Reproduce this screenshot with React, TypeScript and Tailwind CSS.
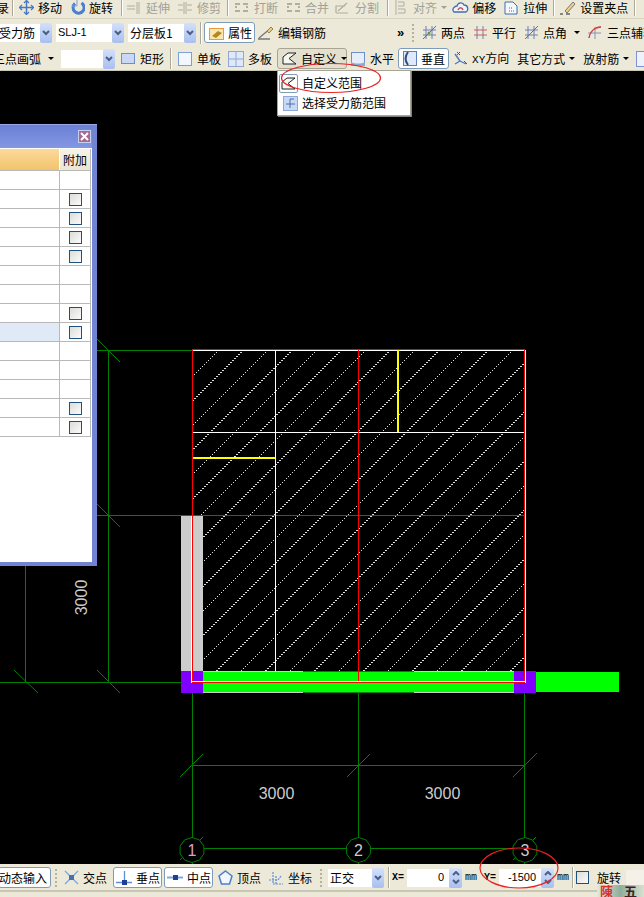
import React from 'react';

const FONT = { fontFamily: '"Noto Sans CJK SC", "Liberation Sans", sans-serif' };
const MONO = { fontFamily: '"Liberation Mono", monospace' };
const ARIAL = { fontFamily: '"Liberation Sans", sans-serif' };

const Sep = ({ ml = 0, h = 'h-[24px]' }: { ml?: number; h?: string }) => (
  <span className={`${h} w-[2px] shrink-0 border-l border-[#aca899] border-r-white`} style={{ marginLeft: ml, borderRightWidth: 1 }} />
);

const Grip = ({ ml = 0 }: { ml?: number }) => (
  <span className="flex h-[22px] w-[2px] shrink-0 flex-col justify-between py-[2px]" style={{ marginLeft: ml }}>
    {[0, 1, 2, 3, 4].map((i) => (
      <span key={i} className="h-[2px] w-[2px] bg-[#b5b2a0]" />
    ))}
  </span>
);

const Txt = ({ ml = 0, w, gray, children }: { ml?: number; w?: number; gray?: boolean; children: React.ReactNode }) => (
  <span
    className={`shrink-0 whitespace-nowrap text-[12px] leading-[14px] ${gray ? 'text-[#a3a196]' : 'text-black'}`}
    style={{ marginLeft: ml, width: w }}
  >
    {children}
  </span>
);

const Ic = ({ ml = 0, w = 16, h = 16, children }: { ml?: number; w?: number; h?: number; children: React.ReactNode }) => (
  <svg width={w} height={h} viewBox={`0 0 ${w} ${h}`} fill="none" className="shrink-0" style={{ marginLeft: ml }}>
    {children}
  </svg>
);

const Arrow = ({ ml = 0 }: { ml?: number }) => (
  <span
    className="h-0 w-0 shrink-0 border-x-[3px] border-t-[3px] border-x-transparent border-t-black"
    style={{ marginLeft: ml }}
  />
);

const DropBtn = ({ ml = 0, h = 'h-[20px]' }: { ml?: number; h?: string }) => (
  <span
    className={`flex ${h} w-[12px] shrink-0 items-center justify-center rounded-[2px] bg-linear-to-b from-[#d3e0fb] to-[#a9bfee]`}
    style={{ marginLeft: ml }}
  >
    <svg width="8" height="6" viewBox="0 0 8 6" fill="none">
      <path d="M1 1 L4 4 L7 1" stroke="#4b5f85" strokeWidth="2" />
    </svg>
  </span>
);

const Spin = ({ ml = 0 }: { ml?: number }) => (
  <span
    className="flex h-[20px] w-[13px] shrink-0 flex-col items-center justify-center gap-[3px] rounded-[2px] bg-linear-to-b from-[#d3e0fb] to-[#a9bfee]"
    style={{ marginLeft: ml }}
  >
    <svg width="8" height="5" viewBox="0 0 8 5" fill="none"><path d="M1 4 L4 1 L7 4" stroke="#4b5f85" strokeWidth="2" /></svg>
    <svg width="8" height="5" viewBox="0 0 8 5" fill="none"><path d="M1 1 L4 4 L7 1" stroke="#4b5f85" strokeWidth="2" /></svg>
  </span>
);

const Field = ({ ml = 0, w, right, children }: { ml?: number; w: number; right?: boolean; children?: React.ReactNode }) => (
  <span
    className={`flex h-[18px] shrink-0 items-center bg-white text-[12px] text-black ${right ? 'justify-end pr-[5px]' : 'pl-[2px]'}`}
    style={{ marginLeft: ml, width: w }}
  >
    {children}
  </span>
);

const Pressed = ({ ml = 0, w, dark, children }: { ml?: number; w: number; dark?: boolean; children: React.ReactNode }) => (
  <span
    className={`flex h-[21px] shrink-0 items-center rounded-[3px] border ${dark ? 'border-[#a8a594] bg-[#e3e0d0]' : 'border-[#7f9db9] bg-white'}`}
    style={{ marginLeft: ml, width: w }}
  >
    {children}
  </span>
);

const GrayTrim = ({ flip }: { flip?: boolean }) => (
  <Ic w={14} h={14}>
    <path d={flip ? 'M0 4H5M0 9H5M9 4H14M9 9H14M6 1V13M8 1V13' : 'M0 5H8M0 8H8M10 1V13M12 1V13'} stroke="#b0ae9f" />
  </Ic>
);

const BreakIc = () => (
  <Ic w={15} h={14}>
    <path d="M1 3H6M9 3H14M1 10H6M9 10H14M1 6H3M12 6H14" stroke="#b0ae9f" strokeWidth="2" />
  </Ic>
);

const TwoLines = ({ dot, diag = true }: { dot?: boolean; diag?: boolean }) => (
  <Ic w={15} h={15}>
    <path d="M4 1V14M10 1V14" stroke="#6f7fb5" />
    <path d="M1 5H14M1 10H14" stroke={diag ? '#6f7fb5' : '#d05a5a'} />
    {diag && <path d="M1 14L14 1" stroke="#d84040" />}
    {dot && <circle cx="7" cy="8" r="1.5" fill="#5a9a40" />}
  </Ic>
);

const Row1 = () => (
  <div className="flex h-[19px] items-center overflow-hidden border-b border-[#d8d4c2] pb-[3px]">
    <Txt ml={-3} w={15}>录</Txt>
    <Sep ml={0} h="h-[17px]" />
    <Ic ml={5} w={15} h={15}>
      <path d="M7.5 1V14M1 7.5H14" stroke="#4a78c0" strokeWidth="1.5" />
      <path d="M5 3L7.5 .5L10 3M5 12L7.5 14.5L10 12M3 5L.5 7.5L3 10M12 5L14.500 7.500L12 10" stroke="#4a78c0" strokeWidth="1.3" />
    </Ic>
    <Txt ml={4}>移动</Txt>
    <Ic ml={9} w={14} h={15}>
      <path d="M4 3.500A5.500 5.500 0 1 0 10.500 3" stroke="#4a7fd0" strokeWidth="3" />
      <path d="M6 0V6H1" stroke="#7aa0e0" strokeWidth="1" />
    </Ic>
    <Txt ml={4}>旋转</Txt>
    <Sep ml={8} h="h-[17px]" />
    <span className="ml-[4px]"><GrayTrim /></span>
    <Txt ml={5} gray>延伸</Txt>
    <span className="ml-[8px]"><GrayTrim flip /></span>
    <Txt ml={5} gray>修剪</Txt>
    <Sep ml={6} h="h-[17px]" />
    <span className="ml-[5px]"><BreakIc /></span>
    <Txt ml={5} gray>打断</Txt>
    <span className="ml-[8px]"><BreakIc /></span>
    <Txt ml={4} gray>合并</Txt>
    <Ic ml={6} w={15} h={14}>
      <path d="M1 12H13M1 12V5L10 5M3 10L12 2" stroke="#b0ae9f" strokeWidth="1.200" />
    </Ic>
    <Txt ml={5} gray>分割</Txt>
    <Sep ml={8} h="h-[17px]" />
    <Ic ml={6} w={11} h={15}>
      <path d="M1 0V15M3 2H9V6H3M3 9H10V13H3" stroke="#b0ae9f" />
    </Ic>
    <Txt ml={7} gray>对齐</Txt>
    <span className="ml-[4px] h-0 w-0 shrink-0 border-x-[3px] border-t-[3px] border-x-transparent border-t-[#a3a196]" />
    <Ic ml={5} w={17} h={14}>
      <path d="M2 11C-1 8 3 5 5 5C6 1 11 1 12 4C16 4 17 9 14 11Z" stroke="#3f6fb0" strokeWidth="1.300" fill="#eef3fb" />
      <path d="M6 9C7 6 10 6 11 9" stroke="#d05050" strokeWidth="1.500" />
    </Ic>
    <Txt ml={3}>偏移</Txt>
    <Ic ml={8} w={14} h={14}>
      <path d="M1 1H9L13 5V13H1Z" stroke="#3f6fb0" fill="#f4f7fc" />
      <path d="M5 10H11M5 7H8" stroke="#3f6fb0" strokeDasharray="1 1" />
    </Ic>
    <Txt ml={5}>拉伸</Txt>
    <Sep ml={6} h="h-[17px]" />
    <Ic ml={5} w={16} h={16}>
      <path d="M0 14H3M6 14H10" stroke="#222" />
      <path d="M5 11L13 2L15 4L7 13Z" fill="#f2d08a" stroke="#777" />
    </Ic>
    <Txt ml={4}>设置夹点</Txt>
    <Sep ml={6} h="h-[17px]" />
  </div>
);

const Row2 = () => (
  <div className="flex h-[27px] items-center overflow-hidden">
    <Field ml={0} w={40}><span className="-ml-[3px]">受力筋</span></Field>
    <DropBtn />
    <Field ml={4} w={56}><span className="text-[11px]" style={ARIAL}>SLJ-1</span></Field>
    <DropBtn />
    <Field ml={4} w={56}>分层板1</Field>
    <DropBtn />
    <Sep ml={4} h="h-[22px]" />
    <Pressed ml={2} w={51}>
      <Ic ml={4} w={15} h={14}>
        <rect x=".5" y="2.500" width="14" height="11" fill="#fce6b0" stroke="#e89a3c" />
        <path d="M3 10L9 5L13 7L7 12Z" fill="#b08a20" />
      </Ic>
      <Txt ml={4}>属性</Txt>
    </Pressed>
    <Ic ml={3} w={16} h={14}>
      <path d="M1 12L13 2M0 13H12" stroke="#777" strokeWidth="1.300" />
      <path d="M9 5L13 1L15 3L11 7Z" fill="#e9c98a" stroke="#a08040" />
    </Ic>
    <Txt ml={4}>编辑钢筋</Txt>
    <span className="ml-[71px] w-[9px] shrink-0 text-[13px] font-bold leading-[10px] text-black" style={ARIAL}>»</span>
    <Grip ml={6} />
    <span className="ml-[8px]"><TwoLines dot /></span>
    <Txt ml={4}>两点</Txt>
    <span className="ml-[8px]"><TwoLines diag={false} /></span>
    <Txt ml={4}>平行</Txt>
    <span className="ml-[8px]"><TwoLines /></span>
    <Txt ml={4}>点角</Txt>
    <Arrow ml={7} />
    <Ic ml={7} w={15} h={15}>
      <path d="M2 13C3 6 8 2 14 2M1 8H14M8 2V14" stroke="#8a93b8" />
      <path d="M2 13C3 6 8 2 14 2" stroke="#d84040" strokeWidth="1.300" />
    </Ic>
    <Txt ml={5}>三点辅轴</Txt>
  </div>
);

const CustomIc = () => (
  <Ic w={15} h={13}>
    <path d="M1 12V5L6 1H14L7 6.500L14 12Z" stroke="#222" fill="#f7f7f2" />
  </Ic>
);

const Row3 = () => (
  <div className="flex h-[25px] items-center overflow-hidden border-b border-[#c9c6b4] pt-[1px]">
    <Txt ml={-7}>三点画弧</Txt>
    <Arrow ml={7} />
    <Field ml={7} w={42} />
    <DropBtn />
    <Ic ml={6} w={14} h={11}>
      <rect x=".5" y=".5" width="13" height="10" fill="#c9d9f5" stroke="#6f8fc8" />
    </Ic>
    <Txt ml={5}>矩形</Txt>
    <Sep ml={6} h="h-[21px]" />
    <Ic ml={6} w={14} h={14}>
      <rect x=".5" y=".5" width="13" height="13" fill="#f2f6fd" stroke="#7f9fd4" />
    </Ic>
    <Txt ml={5}>单板</Txt>
    <Ic ml={7} w={16} h={16}>
      <rect x=".5" y=".5" width="15" height="15" fill="#dfe9f9" stroke="#8fa8d4" />
      <path d="M8 0V16M0 8H16" stroke="#8fa8d4" />
    </Ic>
    <Txt ml={4}>多板</Txt>
    <Pressed ml={5} w={70} dark>
      <span className="ml-[4px] flex"><CustomIc /></span>
      <Txt ml={4}>自定义</Txt>
      <Arrow ml={4} />
    </Pressed>
    <Ic ml={4} w={14} h={14}>
      <rect x=".5" y=".5" width="13" height="13" fill="#e6eefb" stroke="#6f8fc8" />
      <path d="M0 10C4 12 10 12 14 10V14H0Z" fill="#8fa8d4" />
    </Ic>
    <Txt ml={5}>水平</Txt>
    <Pressed ml={4} w={51}>
      <Ic ml={4} w={14} h={15}>
        <rect x=".5" y=".5" width="13" height="14" fill="#dfe9f9" stroke="#5f7fb8" />
        <path d="M5 1C2 5 2 10 5 14" stroke="#304f85" strokeWidth="2" />
      </Ic>
      <Txt ml={4}>垂直</Txt>
    </Pressed>
    <Ic ml={4} w={15} h={15}>
      <path d="M7 10L2 3M7 10L2 13M7 10L13 13" stroke="#4a78c0" strokeWidth="1.300" />
      <path d="M4 1L7 4M7 1L4 4M11 10L14 13" stroke="#555" />
    </Ic>
    <Txt ml={4}><span className="text-[11px]" style={MONO}>XY</span>方向</Txt>
    <Txt ml={8}>其它方式</Txt>
    <Arrow ml={4} />
    <Txt ml={8}>放射筋</Txt>
    <Arrow ml={4} />
    <Ic ml={7} w={10} h={16}>
      <rect x=".5" y=".5" width="14" height="15" fill="#eef3fb" stroke="#7f8fd8" />
    </Ic>
  </div>
);

const rows = [
  { check: false }, { check: true }, { check: true }, { check: true }, { check: true },
  { check: false }, { check: false }, { check: true }, { check: true, hl: true },
  { check: false }, { check: false }, { check: false }, { check: true }, { check: true },
];

const Panel = () => (
  <div className="absolute left-0 top-[53px] flex h-[442px] w-[97px] flex-col border-t border-t-[#9aa8e4] bg-[#7184d4] pb-[4px] pr-[5px]">
    <div className="flex h-[23px] shrink-0 items-start justify-end bg-linear-to-b from-[#6c80d6] to-[#8397e2] pr-[1px] pt-[5px]">
      <span className="flex h-[13px] w-[13px] items-center justify-center border border-[#c9cfee] bg-[#a56c92]">
        <svg width="9" height="9" viewBox="0 0 9 9"><path d="M1 1L8 8M8 1L1 8" stroke="#fff" strokeWidth="2" /></svg>
      </span>
    </div>
    <div className="flex-1 bg-white pr-[1px] pt-[1px]">
      <div className="flex h-[22px] border-b border-[#b8b8b8]">
        <div className="flex-1 bg-linear-to-b from-[#fcd99c] to-[#f2c36a]" />
        <div className="flex w-[32px] items-center justify-center border-x border-[#b8b8b8] border-l-white bg-linear-to-b from-[#f6f3e8] to-[#ebe5d2] text-[12px] text-black">附加</div>
      </div>
      {rows.map((r, i) => (
        <div key={i} className="flex h-[19px] border-b border-[#b8b8b8]">
          <div className={`flex-1 ${r.hl ? 'bg-[#e0eaf6]' : ''}`} />
          <div className="flex w-[32px] items-center justify-center border-x border-[#b8b8b8]">
            {r.check && <span className="h-[13px] w-[13px] border border-[#1c5180] bg-linear-to-br from-[#dcdcd8] to-[#fbfbfb]" />}
          </div>
        </div>
      ))}
    </div>
  </div>
);

const bubble = (cx: number, cy: number) =>
  Array.from({ length: 10 }, (_, i) => {
    const a = (i / 10) * Math.PI * 2 - Math.PI / 2;
    return `${cx + 12.500 * Math.cos(a)},${cy + 12.500 * Math.sin(a)}`;
  }).join(' ');

const GREEN = '#008000';
const hatch = Array.from({ length: 30 }, (_, i) => 569 + i * 24.500);

const Canvas = () => (
  <div className="relative h-[793px] overflow-hidden bg-black">
    <svg width="644" height="793" viewBox="0 71 644 793" className="block" fontFamily='"Liberation Sans", sans-serif'>
      <defs>
        <clipPath id="slab"><rect x="192" y="350" width="333" height="321" /></clipPath>
      </defs>
      <g clipPath="url(#slab)" stroke="#dcdcdc" strokeDasharray="1.414 1.414" shapeRendering="crispEdges">
        {hatch.map((s) => <line key={s} x1={s - 350} y1={350} x2={s - 680} y2={680} />)}
      </g>
      <g shapeRendering="crispEdges" stroke={GREEN}>
        <line x1="97" y1="350.500" x2="192" y2="350.500" />
        <line x1="97" y1="515.500" x2="192" y2="515.500" />
        <line x1="0" y1="682.500" x2="192" y2="682.500" />
        <line x1="25.500" y1="566" x2="25.500" y2="682" />
        <line x1="108.500" y1="350" x2="108.500" y2="682" />
        <line x1="192.500" y1="693" x2="192.500" y2="864" />
        <line x1="358.500" y1="693" x2="358.500" y2="864" />
        <line x1="524.500" y1="693" x2="524.500" y2="864" />
        <line x1="192" y1="765.500" x2="525" y2="765.500" />
        <line x1="192" y1="848.500" x2="525" y2="848.500" />
      </g>
      <g stroke={GREEN}>
        <line x1="97" y1="339" x2="120" y2="362" />
        <line x1="97" y1="504" x2="120" y2="527" />
        <line x1="97" y1="670" x2="120" y2="693" />
        <line x1="14" y1="670" x2="38" y2="693" />
        <line x1="180" y1="777" x2="203" y2="754" />
        <line x1="347" y1="777" x2="370" y2="754" />
        <line x1="513" y1="777" x2="537" y2="753" />
        <line x1="180" y1="860" x2="203" y2="837" />
        <line x1="513" y1="860" x2="536" y2="837" />
        <polygon points={bubble(192, 850)} />
        <polygon points={bubble(358.500, 850)} />
        <polygon points={bubble(525, 850)} />
      </g>
      <g shapeRendering="crispEdges">
        <rect x="181" y="516" width="22" height="155" fill="#cccccc" />
        <rect x="203" y="672" width="311" height="20" fill="#00ff00" />
        <rect x="536" y="672" width="83" height="20" fill="#00ff00" />
        <rect x="303" y="671" width="111" height="1" fill="#008000" />
        <rect x="303" y="692" width="111" height="1" fill="#008000" />
        <rect x="203" y="671" width="100" height="1" fill="#cccccc" />
        <rect x="203" y="692" width="100" height="1" fill="#cccccc" />
        <rect x="414" y="671" width="100" height="1" fill="#cccccc" />
        <rect x="414" y="692" width="100" height="1" fill="#cccccc" />
        <rect x="181" y="671" width="22" height="22" fill="#8000ff" />
        <rect x="514" y="671" width="22" height="22" fill="#8000ff" />
        <rect x="192" y="350" width="333" height="1" fill="#ffffff" />
        <rect x="192" y="349" width="333" height="1" fill="#ff0000" />
        <rect x="192" y="432" width="333" height="1" fill="#ffffff" />
        <rect x="192" y="515" width="333" height="1" fill="#ff0000" />
        <rect x="275" y="350" width="1" height="321" fill="#ffffff" />
        <rect x="191" y="516" width="1" height="167" fill="#ffffff" />
        <rect x="192" y="350" width="1" height="333" fill="#ff0000" />
        <rect x="358" y="350" width="1" height="333" fill="#ff0000" />
        <rect x="525" y="350" width="1" height="333" fill="#ffffff" />
        <rect x="524" y="350" width="1" height="333" fill="#ff0000" />
        <rect x="192" y="681" width="333" height="1" fill="#ffffff" />
        <rect x="192" y="682" width="333" height="1" fill="#ff0000" />
        <rect x="397" y="350" width="2" height="82" fill="#ffff00" />
        <rect x="193" y="457" width="82" height="2" fill="#ffff00" />
      </g>
      <g fill="#cccccc" fontSize="16">
        <text x="276.500" y="799" textAnchor="middle">3000</text>
        <text x="442.500" y="799" textAnchor="middle">3000</text>
        <text transform="translate(87 597.500) rotate(-90)" textAnchor="middle">3000</text>
        <text x="358.500" y="856" textAnchor="middle">2</text>
        <text x="525" y="856" textAnchor="middle">3</text>
        <text x="192" y="856" textAnchor="middle" fill="#d8a0d0">1</text>
      </g>
    </svg>
    <Panel />
  </div>
);

const DotCross = () => (
  <Ic w={15} h={15}>
    <path d="M1 1L14 14M14 1L1 14" stroke="#7fa5dd" strokeWidth="1.300" />
    <rect x="5" y="5" width="5" height="5" fill="#4a6fb0" />
  </Ic>
);

const StatusBar = () => (
  <div className="flex h-[26px] items-center overflow-hidden pt-[1px]">
    <Pressed ml={-2} w={53}>
      <Txt ml={0}>动态输入</Txt>
    </Pressed>
    <Grip ml={4} />
    <span className="ml-[7px]"><DotCross /></span>
    <Txt ml={4}>交点</Txt>
    <Pressed ml={6} w={49}>
      <Ic ml={2} w={16} h={15}>
        <path d="M8.500 1V12M0 12.500H16" stroke="#5f8fd4" strokeWidth="1.300" />
        <rect x="6" y="10" width="5" height="5" fill="#1f3f90" />
      </Ic>
      <Txt ml={4}>垂点</Txt>
    </Pressed>
    <Pressed ml={2} w={49}>
      <Ic ml={2} w={16} h={9}>
        <path d="M0 4.500H16" stroke="#7fa5dd" strokeWidth="2" />
        <rect x="6" y="2" width="5" height="5" fill="#1f3f90" />
      </Ic>
      <Txt ml={4}>中点</Txt>
    </Pressed>
    <Ic ml={5} w={15} h={15}>
      <polygon points="7.500,1 14,6 11.500,14 3.500,14 1,6" stroke="#4a7fd0" strokeWidth="1.500" fill="#f2f6fd" />
    </Ic>
    <Txt ml={4}>顶点</Txt>
    <Ic ml={7} w={16} h={16}>
      <path d="M5 2V14H15M1 10H10L13 6M8 6V14" stroke="#5f8fd4" strokeDasharray="2 1" strokeWidth="1.200" />
    </Ic>
    <Txt ml={4}>坐标</Txt>
    <Grip ml={8} />
    <Field ml={6} w={44}>正交</Field>
    <DropBtn />
    <Sep ml={4} h="h-[21px]" />
    <span className="ml-[2px] w-[12px] shrink-0 text-[10px] font-bold text-black" style={MONO}>X=</span>
    <Field ml={3} w={42} right><span className="text-[11px]" style={ARIAL}>0</span></Field>
    <Spin />
    <span className="ml-[3px] w-[13px] shrink-0 text-[10px] text-black" style={MONO}>mm</span>
    <span className="ml-[6px] w-[12px] shrink-0 text-[10px] font-bold text-black" style={MONO}>Y=</span>
    <Field ml={3} w={42} right><span className="text-[11px]" style={ARIAL}>-1500</span></Field>
    <Spin />
    <span className="ml-[3px] w-[13px] shrink-0 text-[10px] text-black" style={MONO}>mm</span>
    <Sep ml={2} h="h-[21px]" />
    <span className="ml-[2px] h-[13px] w-[13px] shrink-0 border border-[#1c5180] bg-linear-to-br from-[#dcdcd8] to-[#fbfbfb]" />
    <Txt ml={8}>旋转</Txt>
    <span className="ml-[5px] h-[16px] w-[20px] shrink-0 bg-[#f4f2e8]" />
  </div>
);

const Overlay = () => (
  <svg width="644" height="897" className="pointer-events-none absolute left-0 top-0" fill="none">
    <ellipse cx="331" cy="78" rx="49.500" ry="14.500" stroke="#ee2020" strokeWidth="1.200" />
    <ellipse cx="519" cy="868" rx="39" ry="20" stroke="#ee2020" strokeWidth="1.200" />
  </svg>
);

export default function App() {
  return (
    <div className="relative h-[897px] w-[644px] overflow-hidden bg-[#ece9d8]" style={FONT}>
      <Row1 />
      <Row2 />
      <Row3 />
      <Canvas />
      <StatusBar />
      <div className="h-[2px] bg-[#c9c6b4]" />

      {/* dropdown of 自定义 */}
      <div className="absolute left-[277px] top-[70px] flex h-[46px] w-[134px] flex-col border border-[#a8a594] bg-white pl-[1px] pt-[2px] shadow-[1px_1px_0_#808080]">
        <div className="flex h-[20px] items-center">
          <span className="flex h-[19px] w-[19px] items-center justify-center rounded-[2px] border border-[#7f9db9]">
            <CustomIc />
          </span>
          <Txt ml={4}>自定义范围</Txt>
        </div>
        <div className="flex h-[20px] items-center pl-[4px]">
          <Ic w={15} h={15}>
            <rect x=".5" y=".5" width="14" height="14" fill="#c9d9f5" stroke="#8fa8d4" />
            <path d="M7 3V12M3 8H12M7 3H11" stroke="#4a6fb0" />
          </Ic>
          <Txt ml={4}>选择受力筋范围</Txt>
        </div>
      </div>

      {/* corner seal */}
      <div className="absolute bottom-0 right-0 flex h-[12px] w-[47px] items-center overflow-hidden bg-linear-to-r from-[#e4e8dc] via-[#8fae9c] to-[#d8e0d0] pl-[3px] text-[13px] font-bold leading-[12px]">
        <span className="text-[#d9322e]">陳</span>
        <span className="ml-[11px] text-[#402020]">五</span>
      </div>

      <Overlay />
    </div>
  );
}
